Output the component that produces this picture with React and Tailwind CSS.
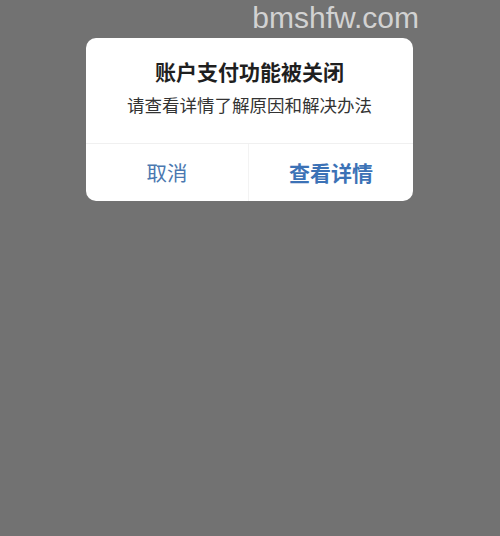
export default function App() {
  const cjk = { fontFamily: '"Noto Sans CJK SC", "Noto Sans", sans-serif' };
  return (
    <div className="w-[500px] h-[536px] bg-[#727272] flex flex-col overflow-hidden">
      <div className="h-[38px] flex justify-end pr-[81px]">
        <span className="text-[30px] leading-[36px] text-[#d2d2d2]" style={{ fontFamily: '"Liberation Sans", Arial, sans-serif' }}>bmshfw.com</span>
      </div>
      <div className="ml-[86px] w-[327px] h-[163px] bg-white rounded-[10px] flex flex-col" style={cjk}>
        <div className="h-[106px] flex flex-col items-center border-b border-[#f0f0f0]">
          <div className="mt-[18px] text-[21px] leading-[30px] font-bold text-[#1f1f1f]">账户支付功能被关闭</div>
          <div className="mt-[7px] text-[17.5px] leading-[24px] text-[#333]">请查看详情了解原因和解决办法</div>
        </div>
        <div className="flex-1 flex">
          <div className="w-[163px] flex items-center justify-center border-r border-[#f3f3f3]">
            <span className="text-[20.5px] text-[#4b78b0]">取消</span>
          </div>
          <div className="flex-1 flex items-center justify-center">
            <span className="text-[21px] font-bold text-[#3c72b6]">查看详情</span>
          </div>
        </div>
      </div>
    </div>
  );
}
